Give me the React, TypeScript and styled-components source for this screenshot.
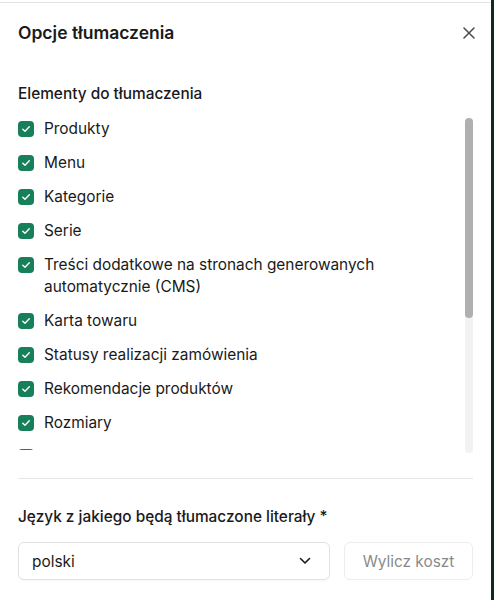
import React from "react";
import styled, { createGlobalStyle } from "styled-components";

const Global = createGlobalStyle`
  html, body { margin: 0; padding: 0; }
  body {
    background: #0f2a24;
    font-family: Inter, "Noto Sans", sans-serif;
    color: #1a1a1a;
    -webkit-font-smoothing: antialiased;
  }
`;

const Panel = styled.div`
  width: 491px;
  height: 600px;
  background: #ffffff;
  padding-top: 2px;
  box-sizing: border-box;
  display: flex;
  flex-direction: column;
`;

const Header = styled.div`
  border-top: 1px solid #e3e3e3;
  display: flex;
  align-items: center;
  justify-content: space-between;
  padding: 18px 18px 0 18px;
  height: 24px;
`;

const Title = styled.h2`
  margin: 0;
  font-size: 17.5px;
  line-height: 24px;
  font-weight: 600;
  color: #1a1a1a;
`;

const CloseButton = styled.button`
  border: none;
  background: none;
  padding: 0;
  width: 20px;
  height: 20px;
  display: flex;
  align-items: center;
  justify-content: center;
  margin-right: -6px;
  color: #4a4a4a;
`;

const Body = styled.div`
  padding: 38px 18px 0 18px;
  display: flex;
  flex-direction: column;
`;

const SectionTitle = styled.div`
  font-size: 15.4px;
  line-height: 22px;
  font-weight: 500;
  color: #1a1a1a;
`;

const ListArea = styled.div`
  margin-top: 13px;
  height: 335px;
  display: flex;
  gap: 12px;
`;

const Items = styled.div`
  flex: 1;
  height: 332px;
  overflow: hidden;
  display: flex;
  flex-direction: column;
  gap: 12px;
`;

const Track = styled.div`
  width: 8px;
  height: 100%;
  border-radius: 4px;
  background: #f2f2f2;
  flex-shrink: 0;
`;

const Thumb = styled.div`
  width: 8px;
  border-radius: 4px;
  background: #b0b0b0;
`;

const Row = styled.label`
  display: flex;
  align-items: flex-start;
  gap: 10px;
  flex-shrink: 0;
  font-size: 15.4px;
  line-height: 22px;
  color: #1a1a1a;
  padding-right: 70px;
`;

const Box = styled.span`
  width: 16px;
  height: 16px;
  flex-shrink: 0;
  margin-top: 3px;
  border-radius: 4px;
  background: #17805a;
  display: flex;
  align-items: center;
  justify-content: center;
`;

const Divider = styled.hr`
  border: none;
  border-top: 1px solid #e6e6e6;
  margin: 25px 0 0 0;
`;

const FieldLabel = styled.div`
  margin-top: 27px;
  font-size: 15.4px;
  line-height: 22px;
  font-weight: 500;
  color: #1a1a1a;
`;

const Controls = styled.div`
  margin-top: 14px;
  display: flex;
  gap: 14px;
`;

const Select = styled.div`
  width: 312px;
  height: 38px;
  box-sizing: border-box;
  border: 1px solid #e2e2e2;
  border-radius: 6px;
  display: flex;
  align-items: center;
  justify-content: space-between;
  padding: 0 18px 0 13px;
  font-size: 15.4px;
  color: #1a1a1a;
  box-shadow: 0 1px 2px rgba(0,0,0,0.04);
`;

const CostButton = styled.button`
  flex: 1;
  height: 38px;
  box-sizing: border-box;
  border: 1px solid #ececec;
  border-radius: 6px;
  background: #ffffff;
  font-family: inherit;
  font-size: 15.4px;
  color: #8a8a8a;
  padding: 0;
`;

const items = [
  "Produkty",
  "Menu",
  "Kategorie",
  "Serie",
  "Treści dodatkowe na stronach generowanych automatycznie (CMS)",
  "Karta towaru",
  "Statusy realizacji zamówienia",
  "Rekomendacje produktów",
  "Rozmiary",
  "Kolory",
];

const Check = () => (
  <svg width="10" height="10" viewBox="0 0 10 10" fill="none">
    <path d="M1.8 5.2 L4 7.3 L8.3 2.8" stroke="#fff" strokeWidth="1.4" strokeLinecap="round" strokeLinejoin="round" />
  </svg>
);

export default function App() {
  const thumbHeight = 200;
  return (
    <>
      <Global />
      <Panel>
        <Header>
          <Title>Opcje tłumaczenia</Title>
          <CloseButton aria-label="Zamknij">
            <svg width="12" height="12" viewBox="0 0 12 12" fill="none">
              <path d="M1 1 L11 11 M11 1 L1 11" stroke="currentColor" strokeWidth="1.5" strokeLinecap="round" />
            </svg>
          </CloseButton>
        </Header>
        <Body>
          <SectionTitle>Elementy do tłumaczenia</SectionTitle>
          <ListArea>
            <Items>
              {items.map((t) => (
                <Row key={t}>
                  <Box><Check /></Box>
                  <span>{t}</span>
                </Row>
              ))}
            </Items>
            <Track>
              <Thumb style={{ height: thumbHeight }} />
            </Track>
          </ListArea>
          <Divider />
          <FieldLabel>Język z jakiego będą tłumaczone literały *</FieldLabel>
          <Controls>
            <Select>
              <span>polski</span>
              <svg width="12" height="8" viewBox="0 0 12 8" fill="none">
                <path d="M1.5 1.5 L6 6 L10.5 1.5" stroke="#1a1a1a" strokeWidth="1.6" strokeLinecap="round" strokeLinejoin="round" />
              </svg>
            </Select>
            <CostButton disabled>Wylicz koszt</CostButton>
          </Controls>
        </Body>
      </Panel>
    </>
  );
}
